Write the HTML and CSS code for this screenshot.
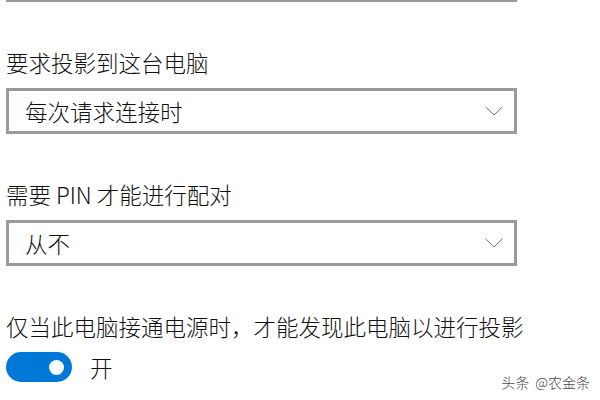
FILE: index.html
```html
<!DOCTYPE html>
<html lang="zh-CN">
<head>
    <meta charset="UTF-8">
    <title>投影到此电脑</title>
    <link rel="stylesheet" href="styles.css">
</head>
<body>
    <div class="panel">
        <!-- lower edge of the previous dropdown, scrolled out of view -->
        <div class="combo combo-cut"></div>

        <div class="setting">
            <div class="setting-label">要求投影到这台电脑</div>
            <div class="combo">
                <span class="combo-value">每次请求连接时</span>
                <svg class="chevron" width="18" height="10" viewBox="0 0 18 10">
                    <polyline points="0.5,0.8 9,9 17.5,0.8" fill="none" stroke="#707070" stroke-width="1"/>
                </svg>
            </div>
        </div>

        <div class="setting">
            <div class="setting-label">需要 PIN 才能进行配对</div>
            <div class="combo">
                <span class="combo-value">从不</span>
                <svg class="chevron" width="18" height="10" viewBox="0 0 18 10">
                    <polyline points="0.5,0.8 9,9 17.5,0.8" fill="none" stroke="#707070" stroke-width="1"/>
                </svg>
            </div>
        </div>

        <div class="setting">
            <div class="setting-label">仅当此电脑接通电源时，才能发现此电脑以进行投影</div>
            <div class="toggle-row">
                <span class="toggle on"><span class="knob"></span></span>
                <span class="toggle-text">开</span>
            </div>
        </div>
    </div>

    <div class="watermark">头条<span class="at">@农金条</span></div>
</body>
</html>
```

FILE: styles.css
```css
html, body {
    height: 100%;
}
body {
    margin: 0;
    background: #fff;
    color: #111;
    font-family: "Noto Sans CJK SC", "Noto Sans", sans-serif;
    font-size: 22.5px;
    font-weight: 300;
    overflow: hidden;
    position: relative;
}
.panel {
    padding-left: 6px;
}
.combo {
    box-sizing: border-box;
    width: 511px;
    height: 46px;
    border: 3px solid #9a9a9a;
    background: #fff;
    display: flex;
    align-items: center;
    justify-content: space-between;
    padding: 0 11px 0 16px;
}
.combo-cut {
    margin-top: -44px;
}
.combo-value {
    line-height: 1;
}
.chevron {
    display: block;
}
.setting {
    margin-top: 45px;
}
.setting-label {
    line-height: 30px;
    margin-bottom: 11px;
    white-space: nowrap;
}
.toggle-row {
    display: flex;
    align-items: center;
    gap: 18px;
    margin-top: 5px;
}
.toggle {
    box-sizing: border-box;
    width: 66px;
    height: 30px;
    border-radius: 15px;
    background: #0078d7;
    display: flex;
    align-items: center;
    justify-content: flex-end;
    padding-right: 8px;
}
.knob {
    width: 15px;
    height: 15px;
    border-radius: 50%;
    background: #fff;
}
.toggle-text {
    line-height: 30px;
}
.watermark {
    position: absolute;
    right: 10px;
    bottom: 9px;
    font-size: 14px;
    line-height: 18px;
    color: #4a4a4a;
    text-shadow: 0 0 2px #fff, 0 0 2px #fff;
}
.watermark .at {
    margin-left: 6px;
}
```
